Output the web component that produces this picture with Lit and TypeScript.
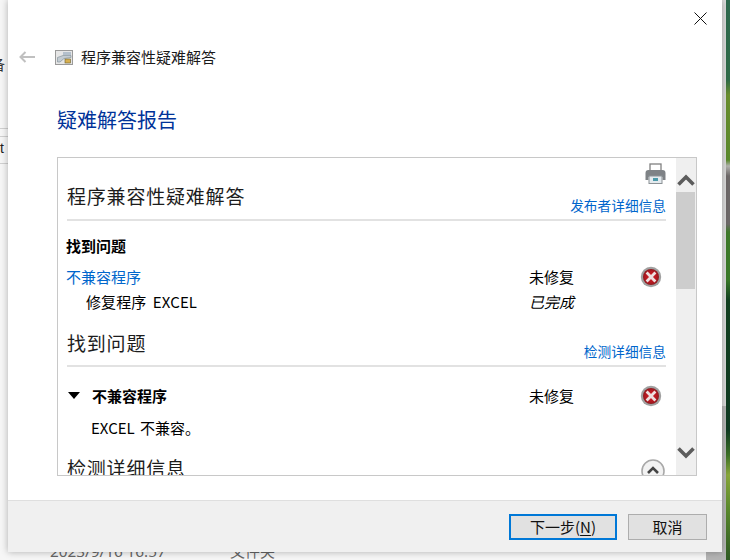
import { LitElement, html, css } from "lit";
import { customElement } from "lit/decorators.js";

const errIcon = html`<svg class="err" width="22" height="22" viewBox="0 0 22 22">
  <defs><radialGradient id="rg" cx="50%" cy="50%" r="50%"><stop offset="0" stop-color="#d82028"/><stop offset="0.75" stop-color="#b01820"/><stop offset="1" stop-color="#8a1a1e"/></radialGradient></defs>
  <circle cx="11" cy="11" r="10.2" fill="#a0a0a0"/>
  <circle cx="11" cy="11" r="8" fill="url(#rg)"/>
  <path d="M7.6 7.6 14.4 14.4M14.4 7.6 7.6 14.4" stroke="#eee0e0" stroke-width="2.8" stroke-linecap="square"/>
</svg>`;

@customElement("app-root")
export class AppRoot extends LitElement {
  static styles = css`
    :host { display: block; position: relative; width: 730px; height: 560px; overflow: hidden; background: #f6f6f6; font-family: "Noto Sans CJK SC", "Noto Sans", sans-serif; color: #000; }
    .bg-right { position: absolute; left: 726px; top: 0; width: 4px; height: 560px; background: linear-gradient(180deg, #2e6a4f 0, #2f6b48 80px, #6b8f2e 95px, #5a8a2c 160px, #b4b4b0 166px, #6d6868 176px, #6d6868 224px, #3f7a2a 232px, #3a7a28 280px, #124020 300px, #0f3a22 430px, #3c7026 455px, #8aa83c 475px, #5a8a2c 510px, #2f5a24 560px); }
    .bg-strip { position: absolute; left: 722px; top: 0; width: 4px; height: 406px; background: #dcdcdc; }
    .bg-strip2 { position: absolute; left: 722px; top: 406px; width: 4px; height: 154px; background: #b8b8b8; }
    .bg-corner { position: absolute; left: 706px; top: 552px; width: 20px; height: 8px; background: #b4b4b4; }
    .bg-line { position: absolute; left: 0; width: 8px; height: 1px; background: #d0d0d0; }
    .l1 { top: 128px; }
    .l2 { top: 136px; }
    .l3 { top: 163px; }
    .bg-t { position: absolute; left: 0; top: 140px; font: 14px "Liberation Sans", sans-serif; color: #222; }
    .bg-c { position: absolute; left: -9px; top: 54px; font-size: 14px; color: #333; }
    .bg-date { position: absolute; left: 50px; top: 541px; font: 15.3px "Noto Sans", sans-serif; color: #666; }
    .bg-type { position: absolute; left: 230px; top: 540px; font-size: 15px; color: #666; }
    .win { position: absolute; left: 8px; top: 0; width: 714px; height: 552px; background: #fff; box-shadow: 0 0 7px rgba(0,0,0,.3); display: flex; flex-direction: column; }
    .close { position: absolute; right: 15px; top: 12px; }
    .main { flex: 1; min-height: 0; padding: 47px 25px 24px 49px; display: flex; flex-direction: column; }
    .nav { display: flex; align-items: center; height: 20px; font-size: 15px; color: #1a1a1a; line-height: 20px; }
    .back { margin-left: -38px; margin-right: 20px; }
    .app { margin-right: 8px; }
    .head { margin: 38px 0 0; font-size: 20px; font-weight: 400; color: #003399; line-height: 30px; height: 30px; }
    .box { margin-top: 22px; height: 319px; box-sizing: border-box; border: 1px solid #c8c8c8; display: flex; overflow: hidden; }
    .content { flex: 1; min-width: 0; padding: 0 10px 0 9px; overflow: hidden; }
    .printer { display: flex; justify-content: flex-end; height: 25px; padding: 5px 0 0; box-sizing: border-box; }
    .sec { display: flex; justify-content: space-between; align-items: flex-end; border-bottom: 2px solid #e2e2e2; height: 36px; }
    .sec h2, .last h2 { margin: 0; font-size: 19px; font-weight: 400; letter-spacing: 0.8px; line-height: 28px; color: #1c1c1c; }
    .sec h2 { padding-bottom: 9px; }
    .sec.two h2 { padding-bottom: 8px; }
    .sec a { font-size: 13.7px; line-height: 20px; color: #0066cc; padding-bottom: 4px; }
    .sec.two { margin-top: 15px; }
    .sub { font-size: 15px; font-weight: 700; line-height: 20px; margin-top: 15px; margin-left: -1px; }
    .row { display: grid; grid-template-columns: 462px 46px 66px 1fr; align-items: center; height: 25px; font-size: 15px; }
    .row .link { color: #0066cc; margin-left: -1px; }
    .row .ind { padding-left: 19px; word-spacing: 3px; letter-spacing: 0.1px; }
    .r1 { margin-top: 8px; }
    .err { margin-left: 65px; display: block; justify-self: start; }
    .tri { display: flex; align-items: center; gap: 12px; font-weight: 700; font-size: 15px; margin-left: 1px; }
    .tri-mark { width: 0; height: 0; border-left: 6px solid transparent; border-right: 6px solid transparent; border-top: 7px solid #000; }
    .r3 { margin-top: 16px; }
    .note { font-size: 15px; line-height: 25px; padding-left: 24px; margin-top: 7px; word-spacing: 2px; }
    .last { display: flex; justify-content: space-between; margin-top: 14px; }
    .round { margin-right: 1px; margin-top: 5px; }
    .scroll { width: 20px; background: #efefef; display: flex; flex-direction: column; }
    .arrow { height: 34px; box-sizing: border-box; display: flex; align-items: center; justify-content: center; }
    .up { padding-top: 8px; }
    .down { padding-bottom: 10px; }
    .track { flex: 1; }
    .thumb { width: 19px; height: 97px; background: #cdcdcd; }
    .foot { height: 52px; box-sizing: border-box; border-top: 1px solid #dfdfdf; background: #f0f0f0; display: flex; justify-content: flex-end; align-items: center; gap: 11px; padding: 0 15px 0 0; }
    .btn { box-sizing: border-box; height: 26px; background: #e1e1e1; display: flex; align-items: center; justify-content: center; font-size: 15px; color: #111; }
    .next { width: 108px; border: 2px solid #0078d7; }
    .cancel { width: 79px; border: 1px solid #adadad; }
    u { text-underline-offset: 2px; }
  `;

  render() {
    return html`
      <div class="bg-c">备</div>
      <div class="bg-line l1"></div>
      <div class="bg-line l2"></div>
      <div class="bg-t">t</div>
      <div class="bg-line l3"></div>
      <div class="bg-right"></div>
      <div class="bg-strip"></div>
      <div class="bg-strip2"></div>
      <div class="bg-corner"></div>
      <div class="bg-date">2023/9/16 16:57</div>
      <div class="bg-type">文件夹</div>
      <div class="win">
        <svg class="close" width="13" height="13" viewBox="0 0 13 13"><path d="M.5.5 12.5 12.5M12.5.5.5 12.5" stroke="#111" stroke-width="1" fill="none"/></svg>
        <div class="main">
          <div class="nav">
            <svg class="back" width="16" height="12" viewBox="0 0 16 12"><path d="M6.5 1 1.5 6 6.5 11M1.5 6H16" stroke="#c0c0c0" stroke-width="2" fill="none"/></svg>
            <svg class="app" width="18" height="15" viewBox="0 0 18 15">
              <rect x=".5" y=".5" width="17" height="14" fill="#e6e6e6" stroke="#9a9a9a"/>
              <rect x="8" y="2" width="8" height="3" fill="#b4c0cc"/>
              <path d="M2.5 12V7.5L8 5.5h8v2L9 8.5 5 12Z" fill="#c4ccd2" stroke="#7b8a94" stroke-width=".6"/>
              <rect x="10" y="9" width="5.5" height="4" fill="#d8b050" stroke="#6a6030" stroke-width=".6"/>
            </svg>
            <span>程序兼容性疑难解答</span>
          </div>
          <h1 class="head">疑难解答报告</h1>
          <div class="box">
            <div class="content">
              <div class="printer">
                <svg width="21" height="21" viewBox="0 0 21 21">
                  <rect x="5" y="1" width="11" height="7" fill="#fff" stroke="#808080" stroke-width="1.3"/>
                  <path d="M.5 10q0-3 3-3h14q3 0 3 3v7h-3v-3h-14v3h-3Z" fill="#7e8286"/>
                  <rect x="4" y="13" width="13" height="7.5" fill="#e4eaee" stroke="#8c9296"/>
                  <rect x="8" y="15" width="5" height="3" fill="#4c9aaa"/>
                </svg>
              </div>
              <div class="sec"><h2>程序兼容性疑难解答</h2><a>发布者详细信息</a></div>
              <div class="sub">找到问题</div>
              <div class="row r1"><span class="link">不兼容程序</span><span>未修复</span>${errIcon}</div>
              <div class="row"><span class="ind">修复程序 EXCEL</span><i>已完成</i></div>
              <div class="sec two"><h2>找到问题</h2><a>检测详细信息</a></div>
              <div class="row r3"><span class="tri"><span class="tri-mark"></span>不兼容程序</span><span>未修复</span>${errIcon}</div>
              <div class="note">EXCEL 不兼容。</div>
              <div class="last"><h2>检测详细信息</h2>
                <svg class="round" width="24" height="24" viewBox="0 0 24 24"><circle cx="12" cy="12" r="11" fill="#f2f2f2" stroke="#a8a8a8" stroke-width="1.6"/><path d="M7 14l5-5 5 5" fill="none" stroke="#444" stroke-width="2.6"/></svg>
              </div>
            </div>
            <div class="scroll">
              <div class="arrow up"><svg width="18" height="13" viewBox="0 0 18 13"><path d="M1.5 11.5 9 4l7.5 7.5" fill="none" stroke="#5c5c5c" stroke-width="3.6"/></svg></div>
              <div class="thumb"></div>
              <div class="track"></div>
              <div class="arrow down"><svg width="18" height="13" viewBox="0 0 18 13"><path d="M1.5 1.5 9 9l7.5-7.5" fill="none" stroke="#5c5c5c" stroke-width="3.6"/></svg></div>
            </div>
          </div>
        </div>
        <div class="foot">
          <div class="btn next"><span>下一步(<u>N</u>)</span></div>
          <div class="btn cancel">取消</div>
        </div>
      </div>
    `;
  }
}
